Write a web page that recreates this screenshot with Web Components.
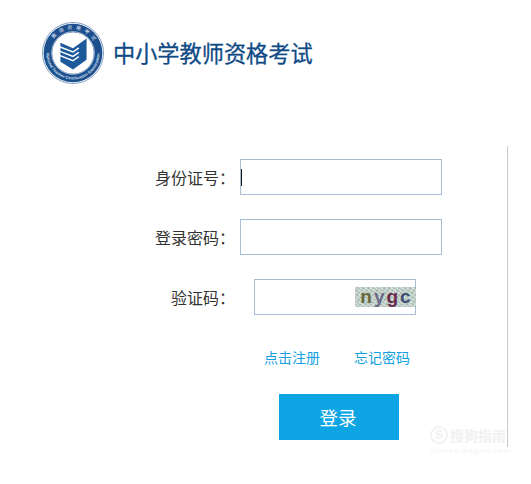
<!DOCTYPE html>
<html lang="zh-CN">
<head>
<meta charset="utf-8">
<title>中小学教师资格考试</title>
<style>
html,body{margin:0;padding:0;background:#fff;}
body{width:531px;height:484px;overflow:hidden;font-family:"Noto Sans CJK SC","Liberation Sans",sans-serif;position:relative;}
</style>
</head>
<body>
<exam-page>
  <exam-header slot="header">中小学教师资格考试</exam-header>
  <form-row label="身份证号：" caret></form-row>
  <form-row label="登录密码："></form-row>
  <form-row label="验证码：" captcha></form-row>
  <link-row><a>点击注册</a><a>忘记密码</a></link-row>
  <login-button>登录</login-button>
</exam-page>
<sogou-mark></sogou-mark>
<script>
class Base extends HTMLElement{
  constructor(html){super();this.attachShadow({mode:'open'}).innerHTML=html;}
}
customElements.define('exam-page',class extends Base{
  constructor(){super(`<style>
    :host{display:block;}
    header{display:block;height:146px;}
    main{display:flex;flex-direction:column;width:508px;height:301px;padding-top:13px;box-sizing:border-box;border-right:1px solid #c9c9c9;}
    .rows{display:flex;flex-direction:column;gap:24px;}
  </style><header><slot name="header"></slot></header><main><div class="rows"><slot></slot></div></main>`);}
});
customElements.define('exam-header',class extends Base{
  constructor(){super(`<style>
    :host{display:flex;align-items:center;gap:9px;padding:22px 0 0 42px;color:#0f4a85;font-size:22.200px;font-weight:400;-webkit-text-stroke:.3px #0f4a85;line-height:62px;}
    svg{display:block;width:62px;height:62px;flex:none;}
    span{display:block;margin-top:-3px;}
  </style>
  <svg viewBox="0 0 64 64" aria-hidden="true">
    <defs>
      <path id="top" d="M7.500 32a24.500 24.500 0 0 1 49 0"/>
      <path id="bot" d="M4.600 32a27.400 27.400 0 0 0 54.800 0"/>
    </defs>
    <circle cx="32" cy="32" r="31.500" fill="#fff" stroke="#7f9dc0" stroke-width="1"/>
    <circle cx="32" cy="32" r="30.300" fill="#1c4f8e"/>
    <circle cx="32" cy="32" r="21.500" fill="#fff"/>
    <circle cx="32" cy="32" r="22" fill="none" stroke="#a9bdd6" stroke-width="1"/>
    <text font-family="Noto Sans CJK SC" font-size="5" fill="#e8eef6" letter-spacing="3.600"><textPath href="#top" startOffset="20%">教师资格考试</textPath></text>
    <text font-family="Liberation Sans" font-size="4" font-weight="700" fill="#dbe5f1" letter-spacing=".1" text-anchor="middle"><textPath href="#bot" startOffset="50%">National Teacher Certification Examination</textPath></text>
    <path d="M19 21.500 32 27 46 17V39L32 49 19 41Z" fill="#1c5a9c"/>
    <path d="M18 25.500 32 31 38 26.800M18 30 32 35.500 38 31.300M18 34.500 32 40 38 35.800" stroke="#fff" stroke-width="1.500" fill="none"/>
  </svg><span><slot></slot></span>`);}
});
customElements.define('form-row',class extends Base{
  constructor(){super(`<style>
    :host{display:grid;grid-template-columns:235px 202px;column-gap:5px;align-items:center;height:36px;color:#333;font-size:16px;}
    label{text-align:right;white-space:nowrap;line-height:36px;}
    .box{position:relative;height:36px;}
    input{display:block;width:100%;height:36px;box-sizing:border-box;margin:0;padding:0 6px;border:1px solid #a6bed6;background:#fff;outline:none;border-radius:0;}
    .caret{position:absolute;left:1px;top:10px;width:1px;height:17px;background:#111;}
    :host([captcha]) .box{margin-left:14px;width:162px;}
    captcha-image{position:absolute;right:0;top:8px;}
  </style><label></label><div class="box"><input type="text"></div>`);}
  connectedCallback(){
    const s=this.shadowRoot;
    s.querySelector('label').textContent=this.getAttribute('label');
    const box=s.querySelector('.box');
    if(this.hasAttribute('caret')&&!box.querySelector('.caret')){const c=document.createElement('i');c.className='caret';box.append(c);}
    if(this.hasAttribute('captcha')&&!box.querySelector('captcha-image')){box.append(document.createElement('captcha-image'));}
  }
});
customElements.define('captcha-image',class extends Base{
  constructor(){super(`<style>
    :host{display:flex;width:61px;height:20px;align-items:center;justify-content:center;gap:2px;overflow:hidden;font:700 19px/20px "Liberation Sans",sans-serif;
      background-color:#bccdc5;
      background-image:repeating-linear-gradient(35deg,rgba(255,255,255,.45) 0 1px,transparent 1px 3px),repeating-linear-gradient(-50deg,rgba(90,110,100,.25) 0 1px,transparent 1px 4px);}
    b{display:block;margin-top:-1px;}
  </style><b style="color:#66683a">n</b><b style="color:#6a6a8a">y</b><b style="color:#6b2b4c">g</b><b style="color:#3f4d72">c</b>`);}
});
customElements.define('link-row',class extends Base{
  constructor(){super(`<style>
    :host{display:flex;gap:34px;padding-left:264px;margin-top:7px;height:22px;color:#12a0de;font-size:14px;line-height:22px;white-space:nowrap;}
    ::slotted(a){color:inherit;text-decoration:none;cursor:pointer;}
  </style><slot></slot>`);}
});
customElements.define('login-button',class extends Base{
  constructor(){super(`<style>
    :host{display:block;margin:2px 0 0 279px;}
    button{display:block;width:120px;height:46px;margin:0;padding:0 2px 0 0;border:0;border-radius:0;background:#0ea5e4;color:#fff;font:18.500px/46px "Noto Sans CJK SC",sans-serif;cursor:pointer;}
  </style><button><slot></slot></button>`);}
});
customElements.define('sogou-mark',class extends Base{
  constructor(){super(`<style>
    :host{position:absolute;left:430px;top:425px;width:90px;height:34px;color:#f1f1f1;pointer-events:none;}
    .a{display:flex;align-items:center;gap:2px;height:20px;font-size:14px;line-height:20px;font-weight:700;white-space:nowrap;}
    i{display:flex;align-items:center;justify-content:center;width:18px;height:18px;box-sizing:border-box;border:2px solid #f2f2f2;border-radius:50%;font:700 12px/1 "Liberation Sans",sans-serif;}
    .b{font:700 8px/10px "Liberation Sans",sans-serif;letter-spacing:.7px;margin-top:1px;color:#f6f6f6;}
  </style><div class="a"><i>S</i><span>搜狗指南</span></div><div class="b">zhinan.sogou.com</div>`);}
});
</script>
</body>
</html>
